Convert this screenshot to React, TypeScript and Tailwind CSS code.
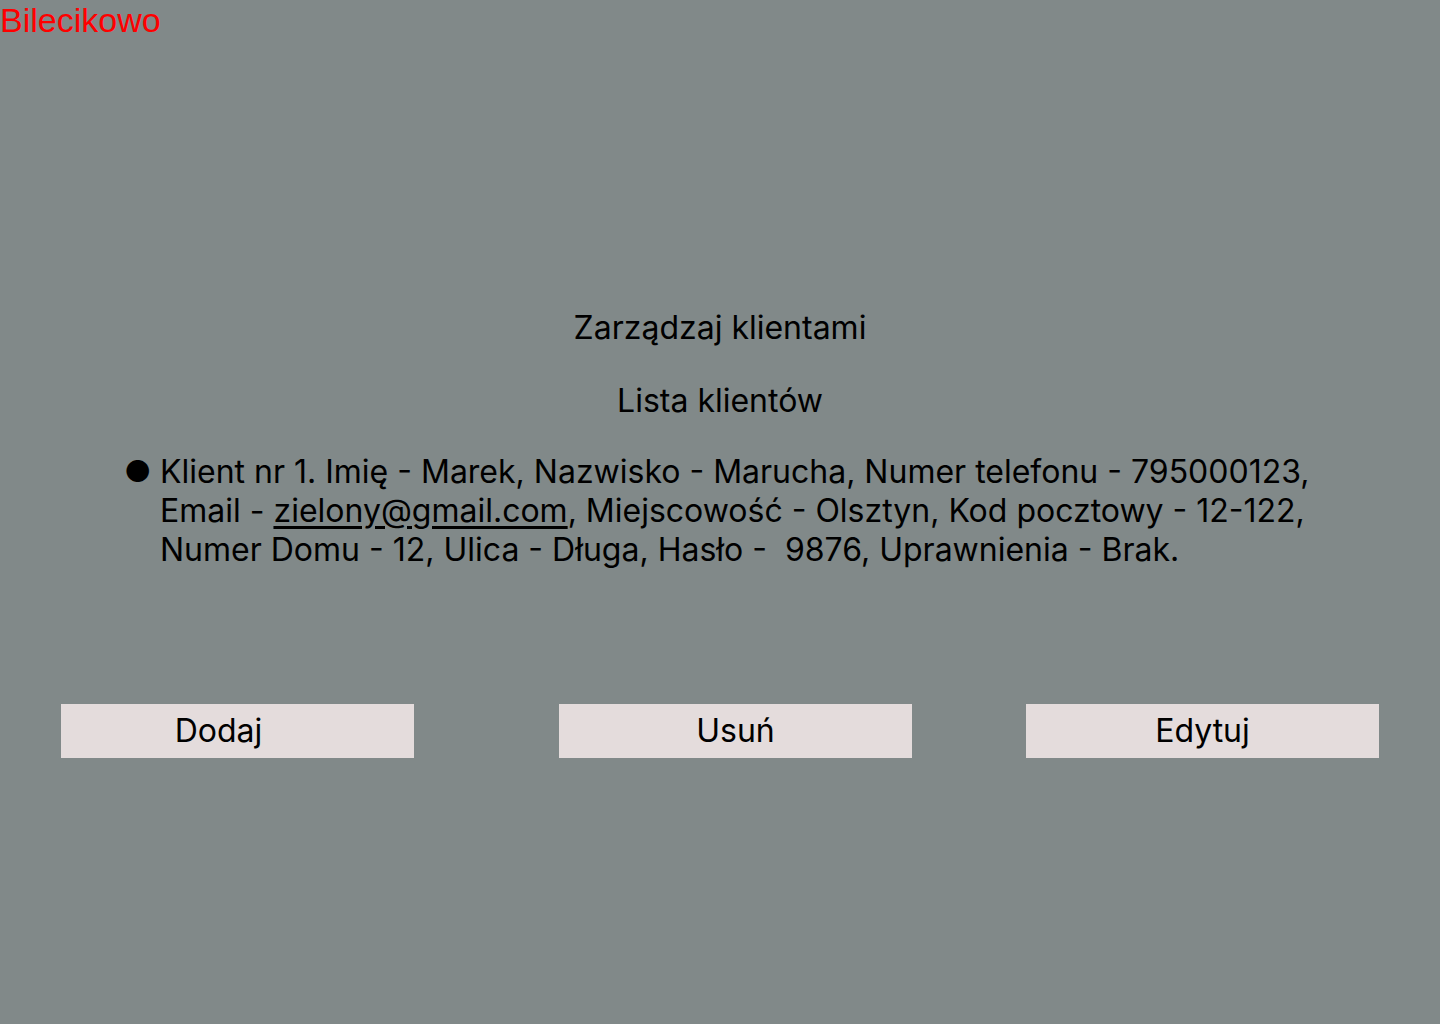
import React from "react";

const client = {
    nr: 1,
    imie: "Marek",
    nazwisko: "Marucha",
    telefon: "795000123",
    email: "zielony@gmail.com",
    miejscowosc: "Olsztyn",
    kod: "12-122",
    dom: "12",
    ulica: "Długa",
    haslo: "9876",
    uprawnienia: "Brak",
};

export default function App() {
    return (
        <div className="min-h-screen w-full bg-[#818989] font-['Inter',sans-serif] text-black">
            <div className="font-['Liberation_Sans',Arial,sans-serif] text-[34px] leading-[40px] text-[#ff0000] h-[40px]">
                Bilecikowo
            </div>

            <div className="flex flex-col items-center pt-[268px]">
                <h1 className="text-[32px] leading-[40px]">Zarządzaj klientami</h1>
                <h2 className="text-[32px] leading-[40px] mt-[33px]">Lista klientów</h2>
            </div>

            <ul className="mt-[31px] pl-[124px]">
                <li className="flex text-[32px] leading-[39px]">
                    <span className="w-[36px] shrink-0 text-[30px] leading-[39px]">●</span>
                    <span className="w-[1180px]">
                        Klient nr {client.nr}. Imię - {client.imie}, Nazwisko - {client.nazwisko}, Numer telefonu - {client.telefon},
                        Email - <a href="#" className="underline underline-offset-4">{client.email}</a>, Miejscowość - {client.miejscowosc}, Kod pocztowy - {client.kod},
                        Numer Domu - {client.dom}, Ulica - {client.ulica}, Hasło - &nbsp;{client.haslo}, Uprawnienia - {client.uprawnienia}.
                    </span>
                </li>
            </ul>

            <div className="flex mt-[135px] pl-[61px]">
                <button className="w-[353px] h-[54px] bg-[#e4dcdc] text-[32px] pr-[38px]">Dodaj</button>
                <button className="w-[353px] h-[54px] bg-[#e4dcdc] text-[32px] ml-[145px]">Usuń</button>
                <button className="w-[353px] h-[54px] bg-[#e4dcdc] text-[32px] ml-[114px]">Edytuj</button>
            </div>
        </div>
    );
}
